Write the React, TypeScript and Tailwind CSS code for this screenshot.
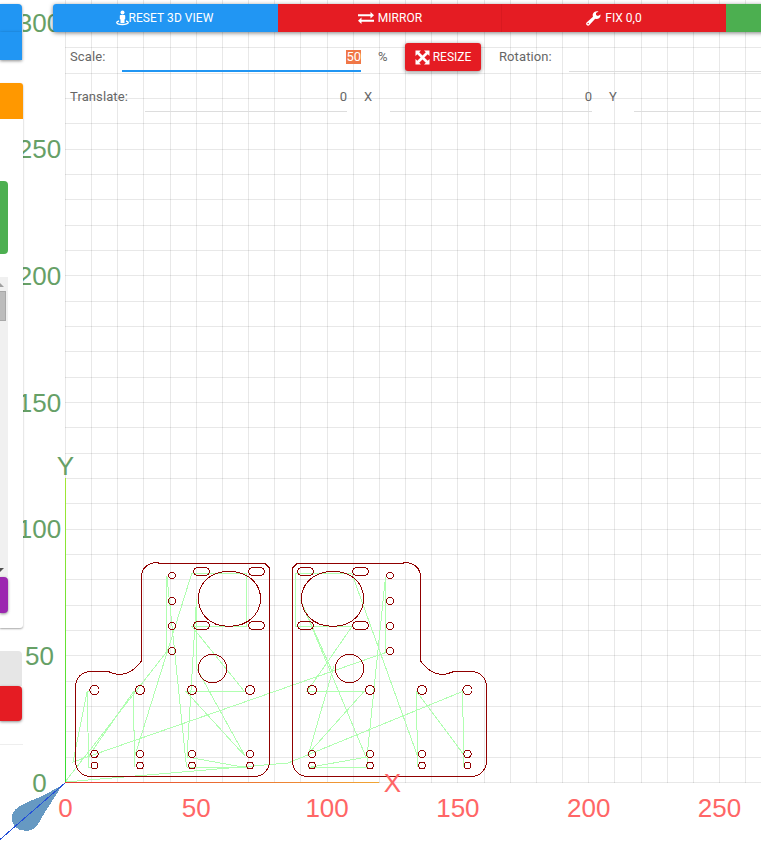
import React from "react";

const columns = Array.from({ length: 27 }, (_, i) => Math.round(65 + i * 26.16));
const rows = Array.from({ length: 31 }, (_, i) => Math.round(782 - i * 25.33));

const partHoles: [number, number, number][] = [
  [172, 575.5, 3.2], [172, 601, 3.5], [172, 626, 3.5], [172, 651, 3.5],
  [94.5, 690, 4.6], [140, 690, 4.6], [192, 690, 4.6], [250, 690, 4.6],
  [94.5, 754, 3.6], [140, 754, 3.6], [192, 754, 3.6], [250, 754, 3.6],
  [94.5, 765.5, 3.4], [140, 765.5, 3.4], [192, 765.5, 3.4], [250, 765.5, 3.4],
  [212.5, 668.5, 14.2],
];

const slots: [number, number][] = [[193.5, 567.5], [248.5, 567.5], [193.5, 621.5], [248.5, 621.5]];

const travel = [
  "M65 782L166.5 652M88 757L134 691M92 767H88.6L87.3 691H91M87.3 691L73 762L386 652.5",
  "M138 691H133.5L134.5 767M134.5 757L191.7 573.5M166.5 576V652M167 577L186.5 767",
  "M196.5 599L187 757M196.5 599L197 669L245 756",
  "M192 573.5H246.5V626.5H192L244.5 691.5H186L245 756M187 757L245 767.5M186.5 767.5H248",
  "M65 782L288 763L462.5 691.5L464 767M352 573.5H295.5V626.5H352L307 691.5H366",
  "M352 574L417.5 756M300.5 600L366 757M300.5 600L332 671M334 666L308 756",
  "M385.5 577V653M385.5 577L367 757V767.5H308.5L367 757M364 691.5L308 754",
  "M417.5 767L416.5 691.5L464 755",
];

function Part() {
  return (
    <g>
      <path d="M141.5 577Q142 564 156 562.5L161 563.5H265L269.5 568V762Q268 775 255 776.5H90Q77 775 75.5 762V686Q77 673 90 671.5H107C112 672 113 674.5 120 674.5C130 674.5 137 667 141.5 661Z" />
      {partHoles.map(([x, y, r], i) => <circle key={i} cx={x} cy={y} r={r} />)}
      {slots.map(([x, y], i) => <rect key={i} x={x} y={y} width="16" height="8" rx="4.8" ry="4" />)}
      <path d="M229 571.5C251 571.5 260.500 586 260.500 598.5S251 626.300 229 626.300S198.500 611 198.500 598.500S207 571.5 229 571.5Z" />
    </g>
  );
}

function Workspace() {
  return (
    <svg className="absolute inset-0" width="761" height="855" viewBox="0 0 761 855">
      <defs>
        <linearGradient id="yAxis" gradientUnits="userSpaceOnUse" x1="0" y1="478" x2="0" y2="782">
          <stop stopColor="#a3e635" /><stop offset="1" stopColor="#33dd33" />
        </linearGradient>
        <linearGradient id="xAxis" gradientUnits="userSpaceOnUse" x1="65" y1="0" x2="379" y2="0">
          <stop stopColor="#e63a32" /><stop offset="1" stopColor="#f0a535" />
        </linearGradient>
      </defs>
      <g fill="#000" fillOpacity=".09" shapeRendering="crispEdges">
        {columns.map((x) => <rect key={x} x={x} y="0" width="1" height="783" />)}
        {rows.map((y) => <rect key={y} x="65" y={y} width="696" height="1" />)}
      </g>
      <g shapeRendering="crispEdges" fill="none">
        <path d="M62 785.500L40 797C25 803 14 807 12 815C10 823 16 831 26 831C35 831 38 825 42 817Z" fill="#6699c2" />
        {travel.map((d) => <path key={d} d={d} stroke="#b0ffb0" />)}
        <rect x="65" y="478" width="1" height="305" fill="url(#yAxis)" />
        <rect x="65" y="782" width="314" height="1" fill="url(#xAxis)" />
        <path d="M65.500 782.500L0 839.500" stroke="#2450d8" />
        <g stroke="#900000">
          <Part />
          <g transform="matrix(-1 0 0 1 562 0)"><Part /></g>
        </g>
      </g>
      <g className="font-['Liberation_Sans',Arial,sans-serif] text-[26px]" textAnchor="middle" fill="#ff6666">
        {[0, 50, 100, 150, 200, 250].map((n) => (
          <text key={n} x={65.500 + n * 2.616} y="817">{n}</text>
        ))}
        <text x="392.500" y="792">X</text>
      </g>
      <g className="font-['Liberation_Sans',Arial,sans-serif] text-[26px]" textAnchor="middle" fill="#66a066">
        {[0, 50, 100, 150, 200, 250, 300].map((n) => (
          <text key={n} x={39.500} y={791.500 - n * 2.533}>{n}</text>
        ))}
        <text x="65.500" y="475">Y</text>
      </g>
    </svg>
  );
}

function StreetIcon() {
  return (
    <svg className="h-4 w-[13px]" viewBox="0 0 13 16" fill="#fff">
      <circle cx="6.500" cy="2.500" r="2" />
      <path d="M4.500 5h4q.7 0 .7.700V9L8.500 9.500V13H4.500V9.500L3.800 9V5.700Q3.800 5 4.500 5Z" />
      <path d="M3 11C1.500 11.400.700 11.900.700 12.600C.700 13.700 3.300 14.500 6.500 14.500S12.300 13.700 12.300 12.600C12.300 11.900 11.500 11.400 10 11" fill="none" stroke="#fff" strokeWidth="1.300" />
    </svg>
  );
}

function ExchangeIcon() {
  return (
    <svg className="h-4 w-4" viewBox="0 0 16 16" fill="#fff">
      <path d="M0 4.200h12.500V2l3.500 3.200-3.500 3.200V6.200H0ZM16 11.800H3.500V14L0 10.800l3.500-3.200V9.800H16Z" />
    </svg>
  );
}

function WrenchIcon() {
  return (
    <svg className="h-[15px] w-[15px]" viewBox="0 0 15 15">
      <path fill="#fff" fillRule="evenodd" d="M14.500 3.600L11.900 5.100L10 4V2L12.600.500C10.500-.300 7.500.500 6.800 3.200Q6.500 4.500 7 5.700L.600 11.400Q-.400 12.700.700 14.100Q2.200 15.200 3.400 14.100L9.200 7.800C12 8.700 14.900 6.700 14.500 3.600ZM1.500 12.500a.7.700 0 1 0 1.400 0a.7.700 0 1 0-1.400 0" />
    </svg>
  );
}

function ResizeIcon() {
  return (
    <svg className="h-[15px] w-[15px]" viewBox="0 0 15 15" fill="#fff">
      <path d="M.5.500H6L4.200 2.300L7.500 5.600L10.800 2.300L9 .500H14.500V6L12.700 4.200L9.400 7.500L12.700 10.800L14.500 9V14.500H9L10.800 12.700L7.500 9.400L4.200 12.700L6 14.500H.500V9L2.300 10.800L5.600 7.500L2.300 4.200L.500 6Z" />
    </svg>
  );
}

function Sidebar() {
  return (
    <aside className="h-[746px] w-[23px] shrink-0 overflow-visible bg-white pt-1">
      <div className="h-7 w-[22px] rounded-tr-sm bg-[#2196f3] shadow-[0_1px_3px_rgba(0,0,0,.45)]" />
      <div className="h-7 w-[22px] bg-[#2196f3] shadow-[0_1px_3px_rgba(0,0,0,.45)]" />
      <div className="mt-[23px] h-[545px] w-[23px] rounded-r-[3px] bg-white shadow-[0_1px_2px_rgba(0,0,0,.35)]">
        <div className="h-9 rounded-tr-[3px] bg-[#ff9800]" />
        <div className="mt-[62px] h-[73px] w-2 rounded-r-sm bg-[#4caf50]" />
        <div className="mt-[23px] flex h-[300px] w-2 flex-col bg-[#f0f0f0] pt-1.5">
          <svg className="h-2 w-1.5" viewBox="0 0 6 8"><path d="M0 0L4 4H0Z" fill="#a0a0a0" /></svg>
          <div className="h-[30px] w-1.5 border-y border-r border-[#a8a8a8] bg-[#bcbcbc]" />
          <svg className="mt-auto mb-[5px] h-1 w-1.5" viewBox="0 0 6 4"><path d="M0 0H4L0 4Z" fill="#505050" /></svg>
        </div>
        <div className="h-9 w-2 rounded-r-sm bg-[#9c27b0] shadow-[0_1px_3px_rgba(0,0,0,.45)]" />
      </div>
      <div className="mt-[23px] h-[35px] w-[22px] rounded-tr-sm bg-[#e6e6e6]" />
      <div className="h-[35px] w-[22px] rounded-r-sm bg-[#e51c23] shadow-[0_1px_3px_rgba(0,0,0,.45)]" />
      <div className="mt-[23px] h-px bg-[#eee]" />
    </aside>
  );
}

function Toolbar() {
  return (
    <div className="flex h-7 w-[720px] rounded-l-[3px] text-[12px] text-white shadow-[0_1px_4px_rgba(0,0,0,.5)]">
      <button className="flex w-[225px] shrink-0 items-center justify-center rounded-l-[3px] bg-[#2196f3] pr-0.5 tracking-[.06px]"><StreetIcon />RESET 3D VIEW</button>
      <button className="flex w-[224px] shrink-0 items-center justify-center gap-1 border-r border-[#d91920] bg-[#e51c23] pl-px tracking-[.06px]"><ExchangeIcon />MIRROR</button>
      <button className="flex w-[224px] shrink-0 items-center justify-center gap-1 bg-[#e51c23]"><WrenchIcon />FIX 0,0</button>
      <button className="grow bg-[#4caf50]" />
    </div>
  );
}

export default function App() {
  return (
    <div className="relative h-[855px] w-[761px] overflow-hidden bg-white font-[Roboto,sans-serif]">
      <Workspace />
      <div className="relative flex">
        <Sidebar />
        <main className="ml-[30px] w-[708px] shrink-0 overflow-visible pt-1">
          <Toolbar />
          <div className="flex h-10 items-start pt-[11px] pl-[17px] text-[13px] text-[#666]">
            <label className="mt-1 w-[52px] shrink-0 leading-5 tracking-[.1px]">Scale:</label>
            <div className="h-[29px] w-[239px] shrink-0 border-b-2 border-[#2196f3] pt-1 text-right leading-5">
              <span className="inline-block h-3.5 bg-[#f07746] leading-[14px] text-white">50</span>
            </div>
            <span className="mt-1 ml-[17px] w-[27px] shrink-0 leading-5">%</span>
            <button className="flex h-7 w-[76px] shrink-0 items-center justify-center gap-[3px] rounded-[3px] bg-[#e51c23] text-[12px] text-white shadow-[0_1px_4px_rgba(0,0,0,.45)]"><ResizeIcon />RESIZE</button>
            <label className="mt-1 ml-[18px] w-[70px] shrink-0 leading-5 tracking-[.1px]">Rotation:</label>
            <div className="h-[29px] w-[220px] shrink-0 border-b border-[#ddd]" />
          </div>
          <div className="flex h-10 items-start pt-[11px] pl-[17px] text-[13px] text-[#666]">
            <label className="mt-1 w-[75px] shrink-0 leading-5 tracking-[.1px]">Translate:</label>
            <div className="h-[29px] w-[202px] shrink-0 border-b border-[#ddd] pt-1 text-right leading-5">0</div>
            <span className="mt-1 ml-[17px] w-[26px] shrink-0 leading-5">X</span>
            <div className="h-[29px] w-[202px] shrink-0 border-b border-[#ddd] pt-1 text-right leading-5">0</div>
            <span className="mt-1 ml-[17px] w-[25px] shrink-0 leading-5">Y</span>
            <div className="h-[29px] w-[150px] shrink-0 border-b border-[#ddd]" />
          </div>
        </main>
      </div>
    </div>
  );
}
